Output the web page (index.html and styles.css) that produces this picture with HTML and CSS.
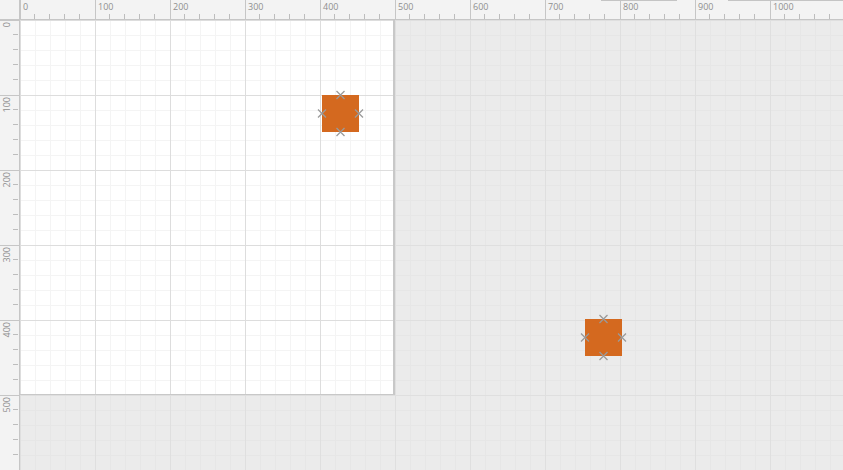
FILE: index.html
```html
<!DOCTYPE html>
<html>
<head>
<meta charset="utf-8">
<link rel="stylesheet" href="styles.css">
</head>
<body>
<div class="editor">
  <div class="corner"></div>
  <div class="ruler-top">
    <div class="seg">0</div><div class="seg">100</div><div class="seg">200</div><div class="seg">300</div>
    <div class="seg">400</div><div class="seg">500</div><div class="seg">600</div><div class="seg">700</div>
    <div class="seg">800</div><div class="seg">900</div><div class="seg">1000</div><div class="seg"></div>
    <div class="thumb thumb-a"></div>
    <div class="thumb thumb-b"></div>
  </div>
  <div class="ruler-left">
    <div class="vseg"><span>0</span></div><div class="vseg"><span>100</span></div><div class="vseg"><span>200</span></div>
    <div class="vseg"><span>300</span></div><div class="vseg"><span>400</span></div><div class="vseg"><span>500</span></div>
    <div class="vseg"><span></span></div>
  </div>
  <div class="canvas">
    <div class="page"></div>
    <div class="shape shape-a">
      <svg class="handles" width="37" height="37" viewBox="0 0 37 37">
        <path d="M14.5 -4L22.5 4M22.5 -4L14.5 4M14.5 33L22.5 41M22.5 33L14.5 41M-4 14.5L4 22.5M4 14.5L-4 22.5M33 14.5L41 22.5M41 14.5L33 22.5"/>
      </svg>
    </div>
    <div class="shape shape-b">
      <svg class="handles" width="37" height="37" viewBox="0 0 37 37">
        <path d="M14.5 -4L22.5 4M22.5 -4L14.5 4M14.5 33L22.5 41M22.5 33L14.5 41M-4 14.5L4 22.5M4 14.5L-4 22.5M33 14.5L41 22.5M41 14.5L33 22.5"/>
      </svg>
    </div>
  </div>
</div>
</body>
</html>
```
FILE: styles.css
```css
html, body {
  margin: 0;
  padding: 0;
  width: 843px;
  height: 470px;
  overflow: hidden;
  background: #ebebeb;
  font-family: "Open Sans", "DejaVu Sans", sans-serif;
}

.editor {
  display: grid;
  grid-template-columns: 20px 823px;
  grid-template-rows: 20px 450px;
  width: 843px;
  height: 470px;
}

.corner {
  background: #f3f3f3;
  border-right: 1px solid #c6c6c6;
  border-bottom: 1px solid #c6c6c6;
  box-sizing: border-box;
}

.ruler-top {
  position: relative;
  display: flex;
  background: #f3f3f3;
  border-bottom: 1px solid #c6c6c6;
  box-sizing: border-box;
  overflow: hidden;
}

.seg {
  flex: 0 0 75px;
  box-sizing: border-box;
  border-left: 1px solid #c6c6c6;
  padding: 1px 0 0 2px;
  font-size: 9px;
  line-height: 12px;
  color: #8f8f8f;
  background-image: repeating-linear-gradient(to right, transparent 0 14px, #bdbdbd 14px 15px);
  background-size: 60px 5px;
  background-position: -1px 14px;
  background-repeat: no-repeat;
}

.thumb {
  position: absolute;
  top: 0;
  height: 1px;
  background: #c4c4c4;
}

.thumb-a { left: 581px; width: 76px; }
.thumb-b { left: 708px; width: 120px; }

.ruler-left {
  display: flex;
  flex-direction: column;
  background: #f3f3f3;
  border-right: 1px solid #c6c6c6;
  box-sizing: border-box;
  overflow: hidden;
}

.vseg {
  flex: 0 0 75px;
  box-sizing: border-box;
  border-top: 1px solid #c6c6c6;
  background-image: repeating-linear-gradient(to bottom, transparent 0 14px, #bdbdbd 14px 15px);
  background-size: 5px 60px;
  background-position: 13px -1px;
  background-repeat: no-repeat;
}

.vseg span {
  display: block;
  writing-mode: vertical-rl;
  transform: rotate(180deg);
  font-size: 9px;
  line-height: 12px;
  color: #8f8f8f;
  margin: 1px 0 0 1px;
}

.canvas {
  position: relative;
  overflow: hidden;
  background-color: #ebebeb;
  background-image:
    repeating-linear-gradient(to right, #dfdfdf 0 1px, transparent 1px 75px),
    repeating-linear-gradient(to bottom, #dfdfdf 0 1px, transparent 1px 75px),
    repeating-linear-gradient(to right, #e6e6e6 0 1px, transparent 1px 15px),
    repeating-linear-gradient(to bottom, #e6e6e6 0 1px, transparent 1px 15px);
}

.page {
  width: 373px;
  height: 374px;
  border-right: 2px solid #c8c8c8;
  border-bottom: 1px solid #c8c8c8;
  background-color: #ffffff;
  background-image:
    repeating-linear-gradient(to right, #dddddd 0 1px, transparent 1px 75px),
    repeating-linear-gradient(to bottom, #dddddd 0 1px, transparent 1px 75px),
    repeating-linear-gradient(to right, #f4f4f4 0 1px, transparent 1px 15px),
    repeating-linear-gradient(to bottom, #f4f4f4 0 1px, transparent 1px 15px);
}

.shape {
  position: absolute;
  width: 37px;
  height: 37px;
  background: #d4691f;
}

.shape-a { left: 302px; top: 75px; }
.shape-b { left: 565px; top: 299px; }

.handles {
  display: block;
  overflow: visible;
}

.handles path {
  fill: none;
  stroke: #9a9a9a;
  stroke-width: 1.3;
}
```
